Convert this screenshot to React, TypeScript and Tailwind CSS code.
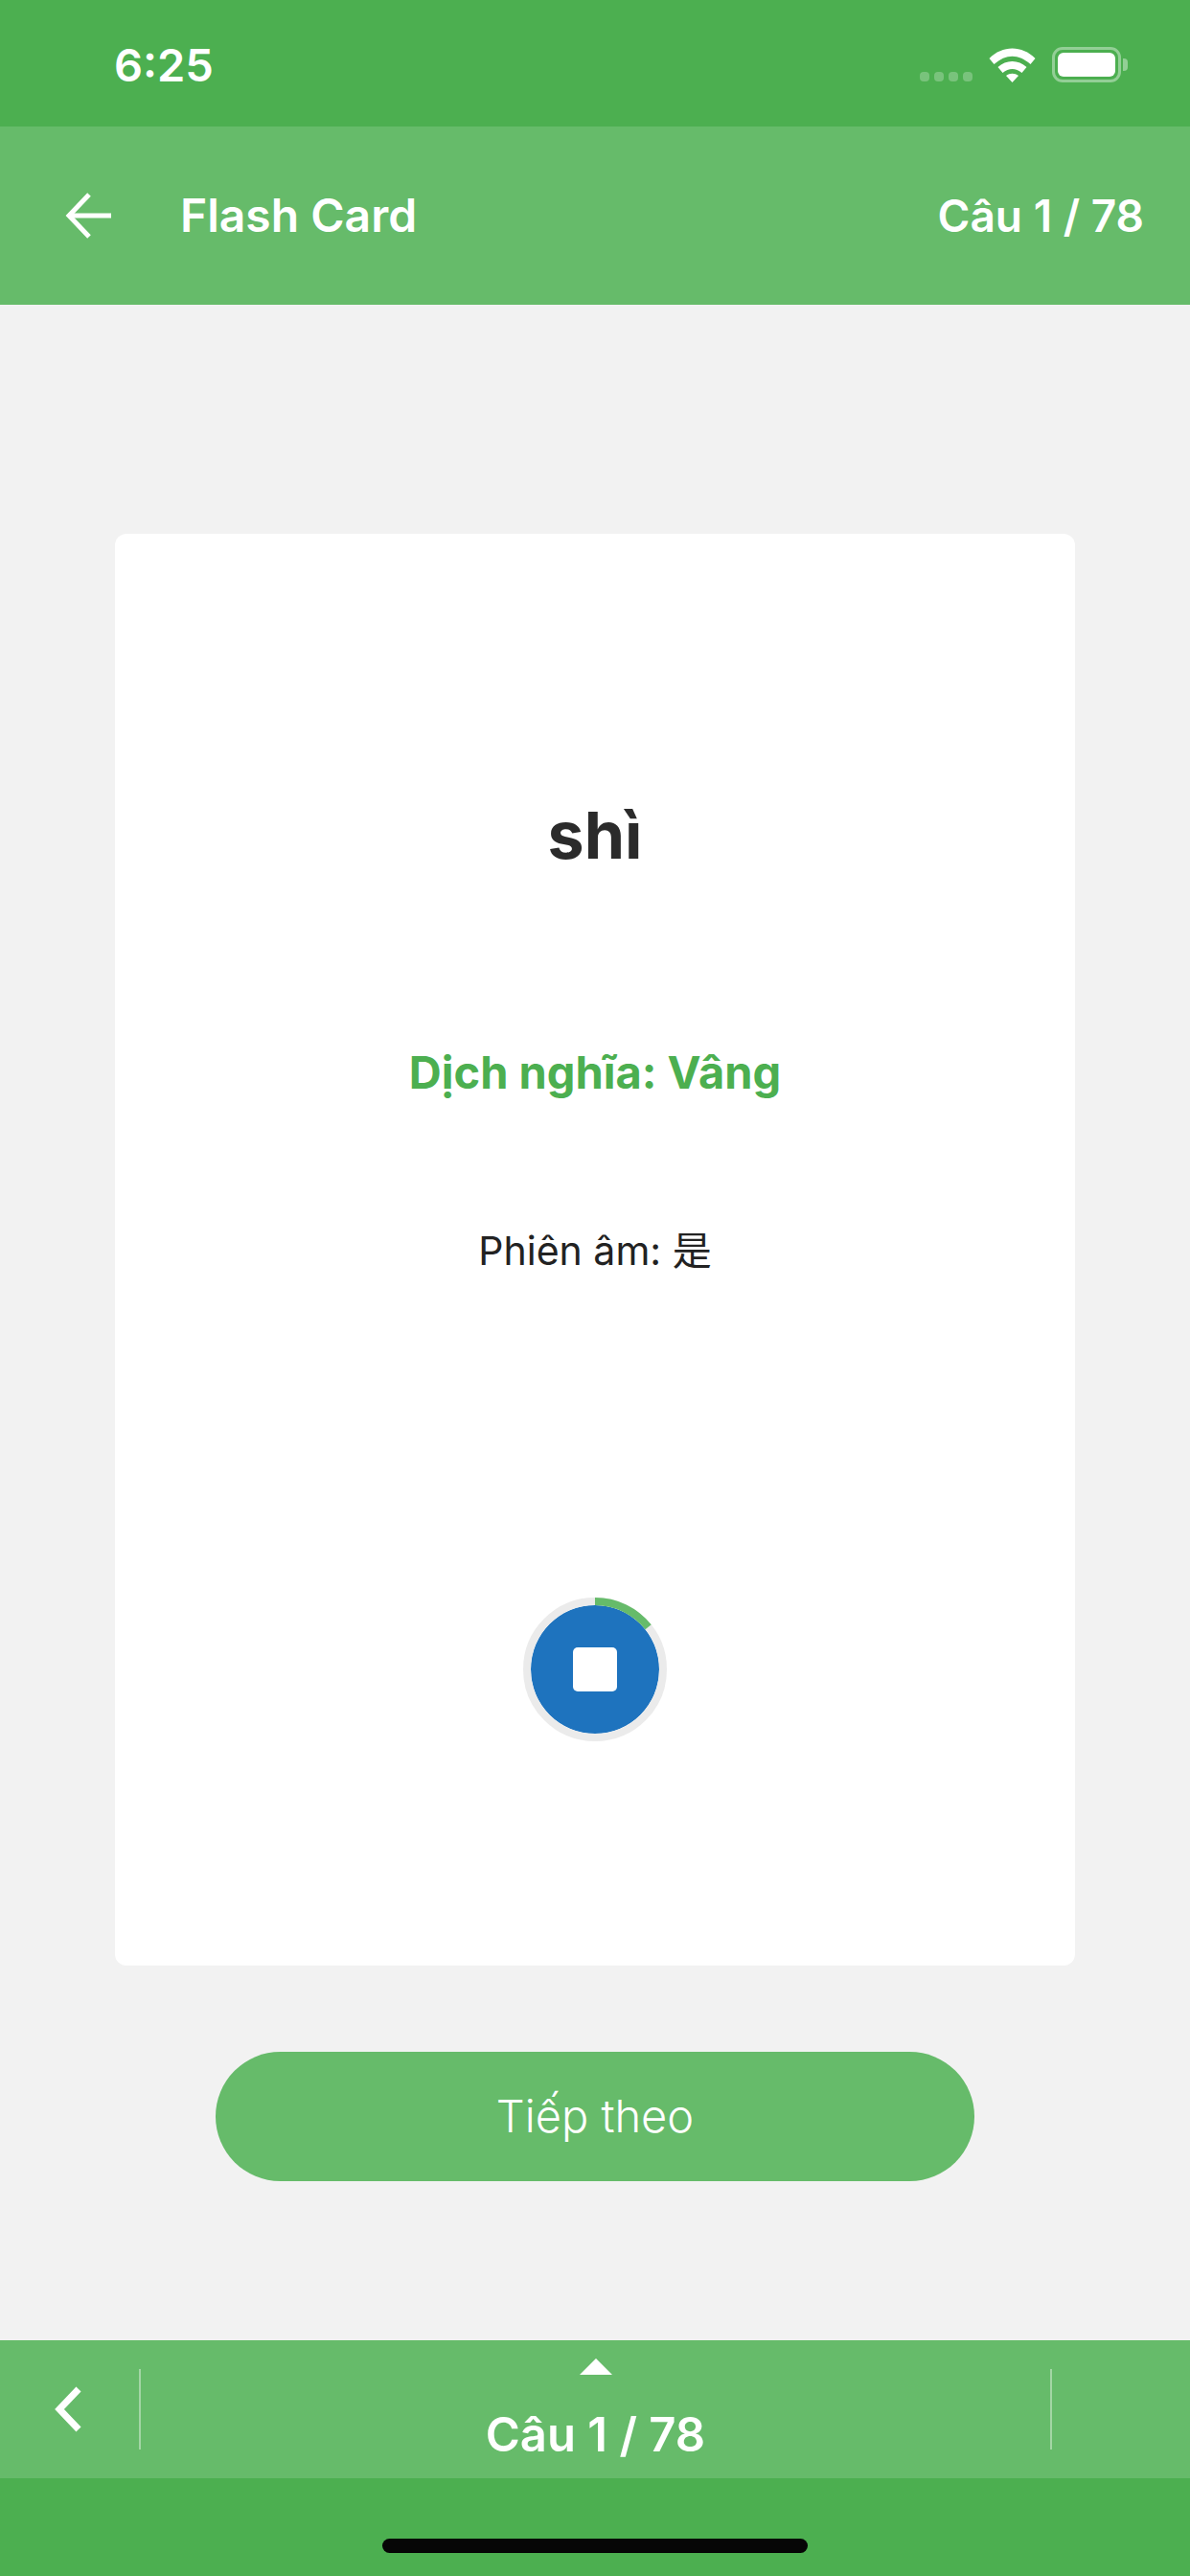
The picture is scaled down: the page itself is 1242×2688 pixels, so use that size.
const font = { fontFamily: '"Inter", "Noto Sans CJK SC", sans-serif' };

function StatusBar() {
  return (
    <div className="h-[132px] bg-[#4caf50] flex items-start justify-between pl-[119px] pr-[72px]">
      <span className="mt-[40px] text-[47px] leading-[56px] font-semibold text-white">6:25</span>
      <div className="flex items-start mt-[49px]">
        <div className="flex gap-[5px] mt-[26px]">
          {[0, 1, 2, 3].map((i) => (
            <div key={i} className="w-[10px] h-[10px] rounded-[4px] bg-white/25" />
          ))}
        </div>
        <svg className="ml-[17px] mt-[1px]" width="49" height="36" viewBox="0 0 49 36">
          <path d="M0.5 11 C14 -3 35 -3 48.5 11 L43.5 17 C31 6 18 6 5.5 17 Z" fill="#fff" />
          <path d="M9.5 20 C18 12 31 12 39.5 20 L34.5 26 C28 20.5 21 20.5 14.5 26 Z" fill="#fff" />
          <path d="M18 29 C22 26 27 26 31 29 L24.5 36 Z" fill="#fff" />
        </svg>
        <div className="relative ml-[17px] w-[72px] h-[37px] rounded-[11px] border-[3px] border-white/40 p-[3px]">
          <div className="w-full h-full rounded-[6px] bg-white" />
          <div className="absolute right-[-10px] top-[9px] w-[5px] h-[13px] rounded-r-[4px] bg-white/40" />
        </div>
      </div>
    </div>
  );
}

function Header() {
  return (
    <div className="h-[186px] bg-[#66bb6a] flex items-center justify-between pl-[68px] pr-[48px] text-white">
      <div className="flex items-center">
        <svg width="50" height="50" viewBox="0 0 50 50" fill="none" stroke="#fff" strokeWidth="5">
          <path d="M25 3 L4 25 L25 47" />
          <path d="M4 25 H48" />
        </svg>
        <span className="ml-[70px] text-[48px] leading-[60px] font-semibold">Flash Card</span>
      </div>
      <span className="text-[46px] leading-[60px] font-semibold">Câu 1 / 78</span>
    </div>
  );
}

function StopButton() {
  return (
    <div className="relative w-[150px] h-[150px] flex items-center justify-center">
      <svg className="absolute inset-0" width="150" height="150" viewBox="0 0 150 150" fill="none">
        <circle cx="75" cy="75" r="71" stroke="#ebebeb" strokeWidth="8" />
        <path d="M75 4 A71 71 0 0 1 130.6 30.8" stroke="#66bb6a" strokeWidth="8" />
      </svg>
      <div className="w-[134px] h-[134px] rounded-full bg-[#1e73be] flex items-center justify-center">
        <div className="w-[46px] h-[46px] rounded-[5px] bg-white" />
      </div>
    </div>
  );
}

function BottomBar() {
  return (
    <div className="h-[144px] bg-[#66bb6a] flex items-center text-white">
      <div className="w-[147px] h-[84px] border-r-2 border-white/40 flex items-center pl-[56px]">
        <svg width="32" height="48" viewBox="0 0 32 48" fill="none" stroke="#fff" strokeWidth="7">
          <path d="M26 3 L6 24 L26 45" />
        </svg>
      </div>
      <div className="flex-1 h-full flex flex-col items-center pt-[19px]">
        <div className="w-0 h-0 border-l-[17px] border-r-[17px] border-b-[17px] border-l-transparent border-r-transparent border-b-white" />
        <span className="mt-[33px] text-[49px] leading-[60px] font-semibold">Câu 1 / 78</span>
      </div>
      <div className="w-[146px] h-[84px] border-l-2 border-white/40" />
    </div>
  );
}

export default function App() {
  return (
    <div className="w-[1242px] h-[2688px] flex flex-col bg-[#f2f2f2]" style={font}>
      <StatusBar />
      <Header />
      <div className="flex-1 flex flex-col items-center pt-[239px]">
        <div className="w-[1002px] h-[1494px] bg-white rounded-[12px] flex flex-col items-center pt-[274px]">
          <div className="text-[68px] leading-[80px] font-bold text-[#2b2b2b]">shì</div>
          <div className="mt-[178px] text-[47px] leading-[60px] font-bold text-[#4caf50]">Dịch nghĩa: Vâng</div>
          <div className="mt-[131px] text-[41px] leading-[50px] text-[#222222]">Phiên âm: 是</div>
          <div className="mt-[337px]">
            <StopButton />
          </div>
        </div>
        <button className="mt-[90px] w-[792px] h-[135px] rounded-full bg-[#66bb6a] text-white text-[47px] font-light">
          Tiếp theo
        </button>
      </div>
      <BottomBar />
      <div className="h-[102px] bg-[#4caf50] flex justify-center pt-[63px]">
        <div className="w-[444px] h-[15px] rounded-full bg-[#060606]" />
      </div>
    </div>
  );
}
